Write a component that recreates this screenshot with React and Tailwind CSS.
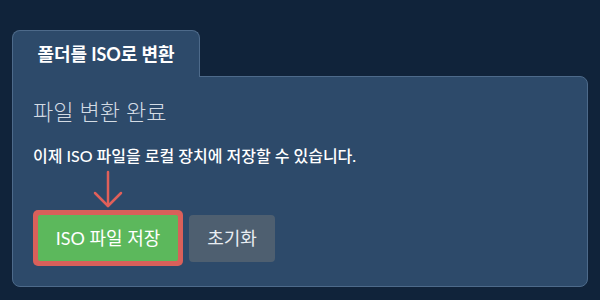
export default function App() {
  const font = { fontFamily: "Lato, 'Noto Sans CJK KR', sans-serif" };
  return (
    <div className="w-[600px] h-[300px] bg-[#10233a] pt-[30px] px-[12px]" style={font}>
      <div className="flex flex-col">
        <div className="w-[188px] h-[47px] -mb-px relative z-10 bg-[#2d4a6a] border border-b-0 border-[#4d6a8a] rounded-t-lg flex items-center justify-center">
          <span className="text-white text-[18px] font-bold tracking-[-0.1px]">폴더를 ISO로 변환</span>
        </div>
        <div className="h-[211px] bg-[#2d4a6a] border border-[#4d6a8a] rounded-b-lg rounded-tr-lg pl-[20px] pt-[20px]">
          <h2 className="text-[22px] font-light leading-[30px] text-[#d3dbe4]">파일 변환 완료</h2>
          <p className="mt-[18px] text-[16px] font-medium leading-[22px] text-white">
            이제 ISO 파일을 로컬 장치에 저장할 수 있습니다.
          </p>
          <div className="ml-[60px] mt-[3px] h-[38px] w-[30px]">
            <svg width="30" height="38" viewBox="0 0 30 38" fill="none" stroke="#e0605a" strokeWidth="2.5" strokeLinecap="round" strokeLinejoin="round">
              <path d="M15 2 V36" />
              <path d="M2 23 L15 36 L28 23" />
            </svg>
          </div>
          <div className="mt-[2px] flex items-center gap-[6px]">
            <div className="rounded-[5px] bg-[#d9605a] p-[5px]">
              <button className="w-[140px] h-[46px] bg-[#5cb85c] text-white text-[18px] rounded-[2px]">
                ISO 파일 저장
              </button>
            </div>
            <button className="w-[86px] h-[47px] bg-[#4e5f70] text-[#e8edf2] text-[18px] rounded-[4px]">
              초기화
            </button>
          </div>
        </div>
      </div>
    </div>
  );
}
